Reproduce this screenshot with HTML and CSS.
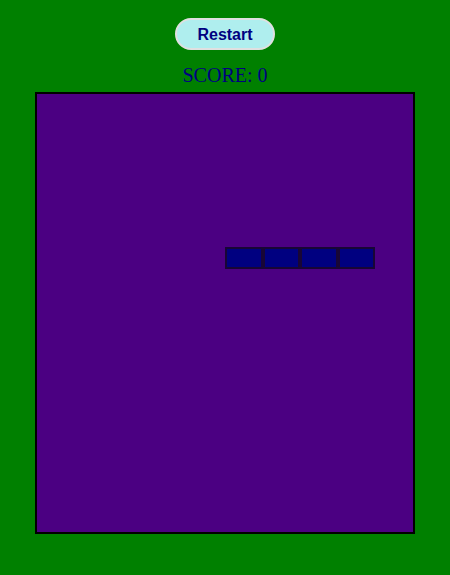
FILE: index.html
```html
<html>
<head>
    <link rel="stylesheet" href="styles.css">
</head>
<body>
    <div class="game">
        <button class="restart_button">Restart</button>
        <p class="score">SCORE: <span id="score">0</span></p>
        <div class="board" id="board">
            <div class="segment" style="grid-column: 6; grid-row: 8;"></div>
            <div class="segment" style="grid-column: 7; grid-row: 8;"></div>
            <div class="segment" style="grid-column: 8; grid-row: 8;"></div>
            <div class="segment" style="grid-column: 9; grid-row: 8;"></div>
        </div>
    </div>
</body>
</html>
```
FILE: styles.css
```css
html {
    box-sizing: border-box;
    height: 100%;
}

body {
    margin: 0;
    background-color: #008000;
    font-family: 'Liberation Serif', serif;
}

.game {
    display: flex;
    flex-direction: column;
    align-items: center;
    padding-top: 18px;
}

.restart_button {
    width: 100px;
    height: 32px;
    padding: 1px 0 0 0;
    font-family: 'Liberation Sans', Arial, sans-serif;
    font-size: 16px;
    font-weight: 700;
    color: #000080;
    background-color: #afeeee;
    border: 2px solid #e0e0e0;
    border-radius: 16px;
    cursor: pointer;
    outline: none;
}

.score {
    margin: 14px 0 5px 0;
    font-size: 20px;
    color: #000080;
}

.board {
    display: grid;
    grid-template-columns: repeat(10, 1fr);
    grid-template-rows: repeat(20, 1fr);
    width: 376px;
    height: 438px;
    background-color: #4b0082;
    border: 2px solid #000000;
}

.segment {
    box-sizing: border-box;
    background-color: #000080;
    border: 2px solid #180636;
}
```
